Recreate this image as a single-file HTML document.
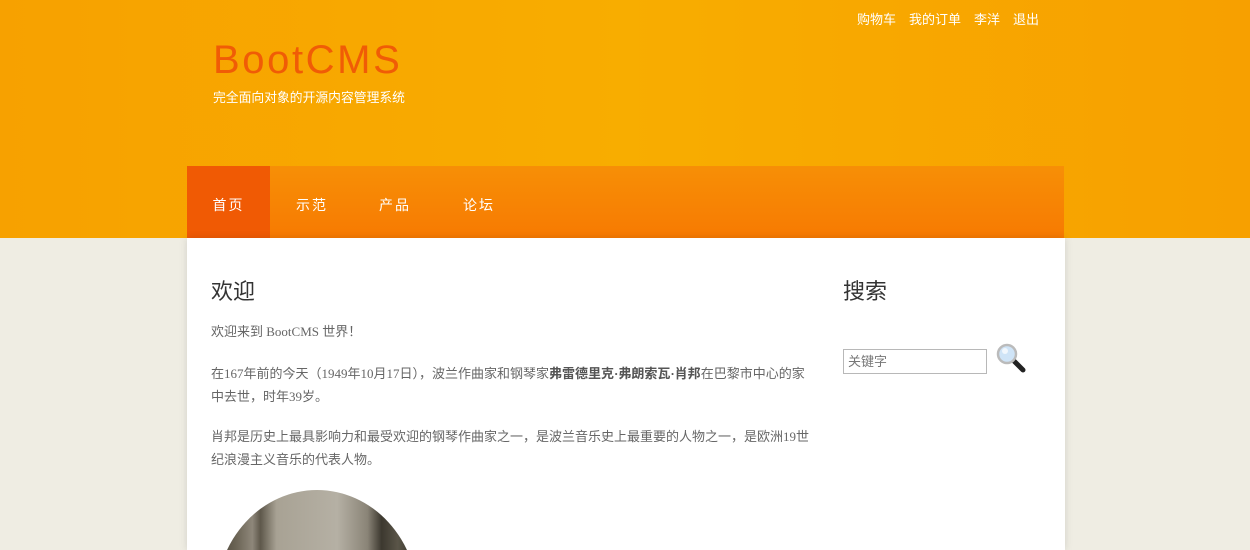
<!DOCTYPE html>
<html style="height:550px;overflow:hidden"><head><meta charset="utf-8">
<style>
*{margin:0;padding:0;box-sizing:border-box}
body{width:1250px;height:550px;overflow:hidden;position:relative;background:#efede3;font-family:"Liberation Sans","Noto Sans CJK SC",sans-serif}
.top{position:absolute;left:0;top:0;width:1250px;height:238px;background:linear-gradient(90deg,#f7a100 0%,#f8ad00 50%,#f7a000 100%)}
.links{position:absolute;top:9px;left:857px;color:#fff;font-size:13px;white-space:nowrap}
.links span{margin-right:13px}
.logo{position:absolute;left:213px;top:38px;font-size:40px;color:#f05c06;letter-spacing:2.6px;font-family:"Liberation Sans",sans-serif}
.sub{position:absolute;left:213px;top:87px;font-size:12.8px;color:#fff}
.nav{position:absolute;left:187px;top:166px;width:877px;height:72px;background:linear-gradient(#f78f06,#f77a02)}
.nav a{position:absolute;top:0;height:72px;line-height:78px;color:#fff;font-size:14px;letter-spacing:2px;text-decoration:none}
.nav .on{left:0;width:83px;background:#f05a04;text-align:center}
.main{position:absolute;left:187px;top:238px;width:878px;height:312px;overflow:hidden;background:#fff;box-shadow:0 0 8px rgba(0,0,0,.12)}
h1{position:absolute;font-size:22px;font-weight:normal;color:#333}
.p{position:absolute;left:24px;width:600px;font-size:13px;line-height:23px;color:#666;font-family:"Liberation Serif","Noto Sans CJK SC",serif}
.p b{color:#555}
.inp{position:absolute;left:656px;top:111px;width:144px;height:25px;border:1px solid #b8b8b8;font-size:13px;color:#777;padding:3px 4px;line-height:17px}
</style></head><body>
<div class="top"></div>
<div class="links"><span>购物车</span><span>我的订单</span><span>李洋</span><span>退出</span></div>
<div class="logo">BootCMS</div>
<div class="sub">完全面向对象的开源内容管理系统</div>
<div class="nav">
<a class="on">首页</a><a style="left:109px">示范</a><a style="left:192px">产品</a><a style="left:276px">论坛</a>
</div>
<div class="main">
<h1 style="left:24px;top:36px">欢迎</h1>
<div class="p" style="top:82px">欢迎来到 BootCMS 世界！</div>
<div class="p" style="top:124px">在167年前的今天（1949年10月17日），波兰作曲家和钢琴家<b>弗雷德里克·弗朗索瓦·肖邦</b>在巴黎市中心的家中去世，时年39岁。</div>
<div class="p" style="top:187px">肖邦是历史上最具影响力和最受欢迎的钢琴作曲家之一，是波兰音乐史上最重要的人物之一，是欧洲19世纪浪漫主义音乐的代表人物。</div>
<svg style="position:absolute;left:29px;top:252px" width="202" height="60" viewBox="0 0 202 60">
<defs><linearGradient id="g" x1="0" x2="1" y1="0" y2="0">
<stop offset="0" stop-color="#4a4538"/><stop offset=".1" stop-color="#6b6455"/><stop offset=".18" stop-color="#8e877a"/><stop offset=".22" stop-color="#5e584b"/><stop offset=".3" stop-color="#a8a294"/><stop offset=".6" stop-color="#b5b0a4"/><stop offset=".75" stop-color="#8a8477"/><stop offset=".82" stop-color="#3c382f"/><stop offset=".9" stop-color="#5a5548"/><stop offset="1" stop-color="#2f2b24"/>
</linearGradient></defs>
<ellipse cx="101" cy="110" rx="101" ry="110" fill="url(#g)"/>
</svg>
<h1 style="left:656px;top:36px">搜索</h1>
<div class="inp">关键字</div>
<svg style="position:absolute;left:809px;top:105px" width="32" height="32" viewBox="0 0 32 32">
<line x1="17" y1="17" x2="27" y2="27" stroke="#222" stroke-width="5" stroke-linecap="round"/>
<circle cx="11" cy="11" r="9" fill="#cfe4f7" stroke="#bbb" stroke-width="2.5"/>
<circle cx="9" cy="8" r="3" fill="#fff" opacity=".7"/>
</svg>
</div>
</body></html>
